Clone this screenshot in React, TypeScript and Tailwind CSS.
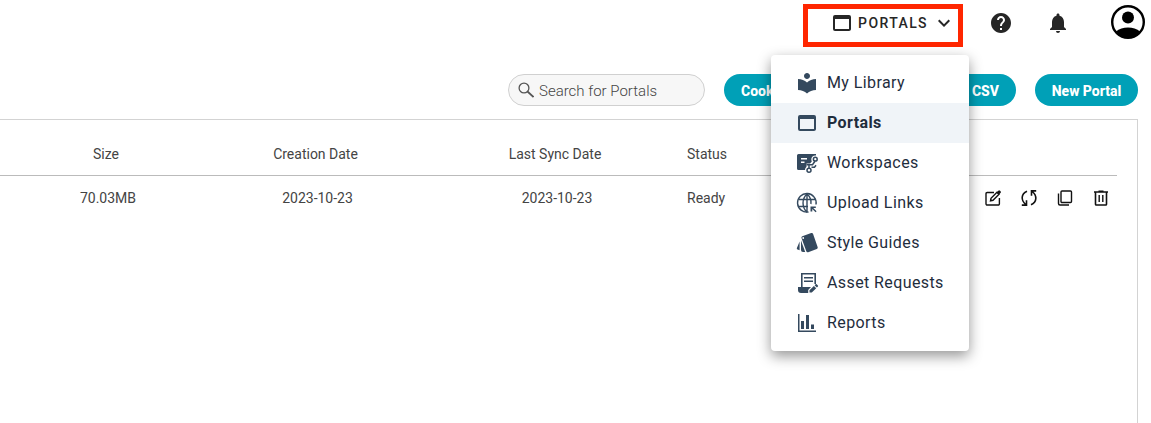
import type { ReactNode } from "react";
import { MdExpandMore, MdHelp, MdLocalLibrary, MdNotifications, MdWebAsset } from "react-icons/md";

function WorkspacesIcon() {
  return (
    <svg viewBox="0 0 24 24" className="size-6" fill="none" stroke="currentColor" aria-hidden="true">
      <path d="M3.500 3H21v1.500A4 4 0 0 0 16.300 9l.5 1.500-1.800 2h-3.500v3.300A4 4 0 0 0 10 19H3.500A1.500 1.500 0 0 1 2 17.500v-13A1.500 1.500 0 0 1 3.500 3z" fill="currentColor" stroke="none" />
      <path d="M6 7.800h6M6 11.200h3.500" stroke="#fff" strokeWidth="1.400" />
      <circle cx="20.300" cy="8.200" r="1.900" strokeWidth="1.500" />
      <circle cx="14" cy="19.200" r="2" strokeWidth="1.500" />
      <path d="M11.500 13.700h6l2.500-3.500M14 17v-3M16.500 16.300h3l1.500-2" strokeWidth="1.500" />
    </svg>
  );
}

function UploadLinksIcon() {
  return (
    <svg viewBox="0 0 24 24" className="size-6" fill="none" stroke="currentColor" strokeWidth="1.400" aria-hidden="true">
      <path d="M21 13.500A9.300 9.300 0 1 0 13.500 21" />
      <path d="M12 2.700C6.700 8 6.700 16 12 21.300M12 2.700c3.300 3.300 4.500 7 3.900 10.300M12 2.700V21M3.500 8.500h17M3.500 15.500H13" />
      <path d="M15.500 15.500h5.300v1.400h-2.500l3.300 3.300-1 1-3.300-3.300v2.500h-1.800z" fill="currentColor" stroke="none" />
    </svg>
  );
}

function StyleGuidesIcon() {
  return (
    <svg viewBox="0 0 24 24" className="size-6" fill="currentColor" aria-hidden="true">
      <path d="M7.300 5.200 16.200 2a1.500 1.500 0 0 1 1.900 1l4.600 13.200a1.500 1.500 0 0 1-.9 1.800l-8.600 3.200a1.500 1.500 0 0 1-1.900-.9L6.500 7a1.500 1.500 0 0 1 .8-1.800z" />
      <path d="M4.600 10.500v8.800l-2-.8a1.200 1.200 0 0 1-.7-1.600z" />
      <path d="m6 9.500 4.200 11.500H8a2 2 0 0 1-2-2z" />
      <circle cx="8.200" cy="7" r=".9" fill="#fff" />
    </svg>
  );
}

function AssetRequestsIcon() {
  return (
    <svg viewBox="0 0 24 24" className="size-6" fill="none" stroke="currentColor" aria-hidden="true">
      <path d="M6.800 16V2.800h13.400V13" strokeWidth="1.600" />
      <path d="M9 6.800h9M9 10.200h9" strokeWidth="1.500" />
      <path d="M3 16h13l-2.800 3v3H6a3 3 0 0 1-3-3z" fill="currentColor" stroke="none" />
      <path d="m14.500 19.300 4.400-4.400 2.300 2.300-4.400 4.400h-2.300zM19.600 14.200l1-1a.8.8 0 0 1 1.100 0l1.200 1.200a.8.8 0 0 1 0 1.100l-1 1z" fill="currentColor" stroke="none" />
    </svg>
  );
}

function ReportsIcon() {
  return (
    <svg viewBox="0 0 24 24" className="size-6" fill="currentColor" aria-hidden="true">
      <path d="M3 3h1.500v16.500H21V21H3zM6 10h3v8H6zM11 4h3v14h-3zM16 13.500h3V18h-3z" />
    </svg>
  );
}

function AvatarIcon() {
  return (
    <svg viewBox="0 0 34 34" className="size-[34px]" aria-hidden="true">
      <circle cx="17" cy="17" r="15.800" fill="#fff" stroke="#000" strokeWidth="2.400" />
      <circle cx="17" cy="12.500" r="6" fill="#000" />
      <path d="M5 26.500c3-2.800 7.500-4 12-4s9 1.200 12 4A15.500 15.500 0 0 1 17 33 15.500 15.500 0 0 1 5 26.500z" fill="#000" />
    </svg>
  );
}

function SearchIcon() {
  return (
    <svg viewBox="0 0 16 16" className="size-4 shrink-0" fill="none" stroke="#555" strokeWidth="1.300" aria-hidden="true">
      <circle cx="6" cy="6" r="4.900" />
      <path d="m9.500 9.500 6 5.500" strokeWidth="1.700" />
    </svg>
  );
}

function RowIcon({ children }: { children: ReactNode }) {
  return (
    <svg viewBox="0 0 16 16" className="size-4" fill="none" stroke="#111" strokeWidth="1.400" aria-hidden="true">
      {children}
    </svg>
  );
}

const menuItems = [
  { label: "My Library", icon: <MdLocalLibrary className="size-6" /> },
  { label: "Portals", icon: <MdWebAsset className="size-6" />, active: true },
  { label: "Workspaces", icon: <WorkspacesIcon /> },
  { label: "Upload Links", icon: <UploadLinksIcon /> },
  { label: "Style Guides", icon: <StyleGuidesIcon /> },
  { label: "Asset Requests", icon: <AssetRequestsIcon /> },
  { label: "Reports", icon: <ReportsIcon /> },
];

const rowActions = [
  {
    label: "Edit",
    icon: (
      <RowIcon>
        <path d="M9 2.500H2.200A1.200 1.200 0 0 0 1 3.700v10.100A1.200 1.200 0 0 0 2.200 15h11a1.200 1.200 0 0 0 1.200-1.200V8" />
        <path d="m5.500 10.800.5-2.500L12 2.300l2 2-6 6z" />
        <path d="m11.500 2.500 1.800-1.800a1.200 1.200 0 0 1 1.700 0l.5.5a1.200 1.200 0 0 1 0 1.700L13.700 4.700z" fill="#111" stroke="none" />
      </RowIcon>
    ),
  },
  {
    label: "Sync",
    icon: (
      <RowIcon>
        <path d="M6 1.200C-.2 4-.2 10.500 4.800 14.500M5.500 10.200v4.900H.8" strokeWidth="1.600" />
        <path d="M10 14.800c6.200-2.800 6.200-9.300 1.200-13.300M10.500 5.800V.9h4.700" strokeWidth="1.600" />
      </RowIcon>
    ),
  },
  {
    label: "Copy",
    icon: (
      <RowIcon>
        <rect x="4" y="1" width="10.500" height="11.500" rx="1" />
        <path d="M1.500 3.500v10a1.500 1.500 0 0 0 1.500 1.500h9" />
      </RowIcon>
    ),
  },
  {
    label: "Delete",
    icon: (
      <RowIcon>
        <path d="M1 2h14M5.500 1.200h5M2.500 2v12.200a.8.800 0 0 0 .8.8h9.400a.8.800 0 0 0 .8-.8V2" strokeWidth="1.600" />
        <path d="M6.200 5v7M9.800 5v7" />
      </RowIcon>
    ),
  },
];

export default function App() {
  return (
    <div className="flex min-h-screen flex-col bg-white font-[Roboto,sans-serif] text-[#444]">
      <header className="flex h-[74px] items-start justify-end pt-1 pr-[6px] text-[#262626]">
        <div className="relative">
          <button
            type="button"
            aria-expanded="true"
            className="flex h-[43px] w-40 items-start justify-end gap-1 border-[5px] border-[#ff2600] pt-[2px] pr-[2px]"
          >
            <MdWebAsset className="size-6" />
            <span className="text-sm leading-6 font-medium tracking-widest">PORTALS</span>
            <MdExpandMore className="size-6" />
          </button>
          <nav className="absolute top-[51px] -right-[6px] z-10 w-[198px] rounded bg-white py-2 shadow-[0_5px_14px_rgba(0,0,0,0.42)]">
            <ul>
              {menuItems.map((item) => (
                <li key={item.label}>
                  <a
                    href="#"
                    className={
                      item.active
                        ? "flex h-10 items-center gap-2 bg-[#f0f4f8] pl-6 font-bold text-[#1f2d3d]"
                        : "flex h-10 items-center gap-2 pl-6 text-[#1f2d3d]"
                    }
                  >
                    <span className="text-[#34495e]">{item.icon}</span>
                    <span className="text-base tracking-wide whitespace-nowrap">{item.label}</span>
                  </a>
                </li>
              ))}
            </ul>
          </nav>
        </div>
        <button type="button" aria-label="Help" className="ml-[26px] flex h-[38px] items-center">
          <MdHelp className="size-6" />
        </button>
        <button type="button" aria-label="Notifications" className="ml-[33px] flex h-[38px] items-center">
          <MdNotifications className="size-6" />
        </button>
        <button type="button" aria-label="Account" className="ml-[41px] flex h-9 items-center">
          <AvatarIcon />
        </button>
      </header>

      <main className="flex flex-1 flex-col pr-[13px]">
        <div className="flex justify-end gap-[19px] pb-[13px]">
          <label className="flex h-8 w-[197px] items-center gap-[5px] rounded-full border border-[#d0d0d0] bg-[#f7f7f7] pl-[9px]">
            <SearchIcon />
            <input
              type="text"
              aria-label="Search for Portals"
              placeholder="Search for Portals"
              className="w-full min-w-0 bg-transparent pt-[2px] text-[15px] font-light outline-none placeholder:text-[#444]"
            />
          </label>
          <button type="button" className="h-8 w-[150px] rounded-full bg-[#00a0b7] pt-[2px] pl-[17px] text-left text-sm font-extrabold text-white">
            Cookies
          </button>
          <button type="button" className="h-8 w-[123px] rounded-full bg-[#00a0b7] pt-[2px] pr-[17px] text-right text-sm font-extrabold text-white">
            Export CSV
          </button>
          <button type="button" className="h-8 w-[103px] rounded-full bg-[#00a0b7] pt-[2px] text-sm font-extrabold text-white">
            New Portal
          </button>
        </div>

        <section className="flex-1 border-t border-r border-[#d3d3d3] pt-3 pr-5">
          <table className="w-full table-fixed text-sm">
            <thead>
              <tr className="h-[43px] border-b border-[#bbb]">
                <th className="w-[208px] pt-[2px] pr-1 pl-2 font-normal">Size</th>
                <th className="w-[219px] pt-[2px] pr-1 font-normal">Creation Date</th>
                <th className="w-[260px] pt-[2px] pr-1 font-normal">Last Sync Date</th>
                <th className="w-[120px] pt-[2px] text-left font-normal">Status</th>
                <th aria-label="Actions" />
              </tr>
            </thead>
            <tbody>
              <tr className="h-[46px] text-center">
                <td className="pl-2">70.03MB</td>
                <td>2023-10-23</td>
                <td>2023-10-23</td>
                <td className="text-left">Ready</td>
                <td className="pr-2">
                  <div className="flex justify-end gap-5">
                    {rowActions.map((action) => (
                      <button key={action.label} type="button" aria-label={action.label}>
                        {action.icon}
                      </button>
                    ))}
                  </div>
                </td>
              </tr>
            </tbody>
          </table>
        </section>
      </main>
    </div>
  );
}
